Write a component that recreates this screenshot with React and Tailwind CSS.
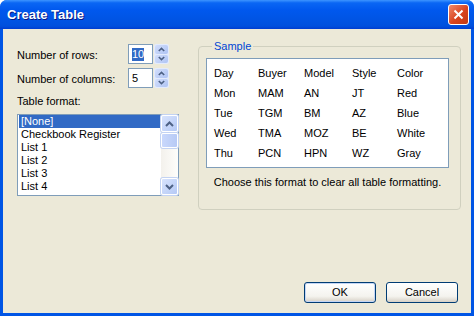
import { useState } from "react"

const font = { fontFamily: '"Liberation Sans", Arial, sans-serif' }

const sample = [
    ["Day", "Buyer", "Model", "Style", "Color"],
    ["Mon", "MAM", "AN", "JT", "Red"],
    ["Tue", "TGM", "BM", "AZ", "Blue"],
    ["Wed", "TMA", "MOZ", "BE", "White"],
    ["Thu", "PCN", "HPN", "WZ", "Gray"],
]

const formats = ["[None]", "Checkbook Register", "List 1", "List 2", "List 3", "List 4"]

function Chevron({ up, small }) {
    return (
        <svg width={small ? 7 : 9} height={small ? 5 : 6} viewBox="0 0 9 6">
            <path d={up ? "M1 5 L4.5 1.5 L8 5" : "M1 1 L4.5 4.5 L8 1"} fill="none" stroke="#4D6185" strokeWidth="2" />
        </svg>
    )
}

function Spin({ value, selected }) {
    return (
        <div className="flex h-[20px] gap-[1px]">
            <div className="w-[25px] h-full bg-white border border-[#7F9DB9] flex items-center pl-[3px]">
                <span className={selected ? "bg-[#316AC5] text-white leading-[13px]" : "leading-[13px]"}>{value}</span>
            </div>
            <div className="w-[15px] h-full flex flex-col bg-[#E3EBFD] p-[1px] gap-[1px] rounded-[2px]">
                <div className="flex-1 bg-[linear-gradient(135deg,#D2DEFB,#AFC4F4)] rounded-[2px] flex items-center justify-center">
                    <Chevron up small />
                </div>
                <div className="flex-1 bg-[linear-gradient(135deg,#D2DEFB,#AFC4F4)] rounded-[2px] flex items-center justify-center">
                    <Chevron small />
                </div>
            </div>
        </div>
    )
}

function ScrollBtn({ up }) {
    return (
        <div className="h-[17px] w-[17px] bg-[linear-gradient(135deg,#D7E3FD,#B5C9F5)] border border-white rounded-[2px] flex items-center justify-center shadow-[0_0_0_1px_#C3D3F3]">
            <Chevron up={up} />
        </div>
    )
}

export default function App() {
    const [sel, setsel] = useState(0)

    return (
        <div className="w-[474px] h-[316px] flex flex-col bg-[#0055E5] rounded-t-[7px] overflow-hidden text-[11px] text-black" style={font}>

            {/* title bar */}
            <div className="h-[29px] shrink-0 flex items-center justify-between pl-[7px] pr-[5px] bg-[linear-gradient(180deg,#3D95FF_0%,#0A66F4_10%,#0058EE_35%,#0054E3_70%,#0050DD_90%,#003DD0_100%)]">
                <span className="text-white font-bold text-[13px] [text-shadow:1px_1px_0_#0A1883]">Create Table</span>
                <div className="w-[21px] h-[21px] rounded-[3px] border border-white bg-[linear-gradient(135deg,#F08A6C,#D8431E_55%,#C13A14)] flex items-center justify-center">
                    <svg width="11" height="11" viewBox="0 0 11 11">
                        <path d="M1.5 1.5 L9.5 9.5 M9.5 1.5 L1.5 9.5" stroke="white" strokeWidth="2" />
                    </svg>
                </div>
            </div>

            {/* body */}
            <div className="flex-1 mx-[3px] mb-[3px] bg-[#ECE9D8] flex flex-col">
                <div className="flex items-start">

                    <div className="ml-[14px] mt-[15px] w-[162px] flex flex-col">
                        <div className="flex items-center h-[20px]">
                            <span className="w-[111px] pt-[2px]">Number of rows:</span>
                            <Spin value="10" selected />
                        </div>
                        <div className="flex items-center h-[20px] mt-[4px]">
                            <span className="w-[111px] pt-[2px]">Number of columns:</span>
                            <Spin value="5" />
                        </div>
                        <div className="mt-[7px] leading-[13px]">Table format:</div>

                        <div className="mt-[6px] h-[82px] w-[162px] border border-[#7F9DB9] bg-white flex">
                            <div className="flex-1 pl-[1px]">
                                {formats.map((f, i) => (
                                    <div
                                        key={i}
                                        onClick={() => setsel(i)}
                                        className={"h-[13px] leading-[13px] pl-[2px] cursor-default " + (sel === i ? "bg-[#316AC5] text-white" : "")}
                                    >
                                        {f}
                                    </div>
                                ))}
                            </div>
                            <div className="w-[17px] bg-[linear-gradient(90deg,#F3F1EC,#FEFEFB)] flex flex-col justify-between">
                                <div>
                                    <ScrollBtn up />
                                    <div className="mt-[1px] h-[15px] w-[17px] bg-[linear-gradient(90deg,#C9D8FC,#B7CAF5)] border border-white rounded-[2px] shadow-[0_0_0_1px_#C3D3F3]" />
                                </div>
                                <ScrollBtn />
                            </div>
                        </div>
                    </div>

                    <fieldset className="ml-[19px] mt-[11px] w-[263px] h-[170px] border border-[#D0D0BF] rounded-[4px] pl-[7px] pr-[11px]">
                        <legend className="text-[#0046D5] px-[2px] ml-[6px] leading-[13px]">Sample</legend>
                        <div className="mt-[5px] border border-[#7F9DB9] bg-white py-[4px] pl-[7px] grid grid-cols-[44px_46px_48px_45px_1fr]">
                            {sample.flat().map((t, i) => (
                                <div key={i} className="h-[20px] leading-[20px]">{t}</div>
                            ))}
                        </div>
                        <div className="mt-[8px] text-center leading-[13px]">Choose this format to clear all table formatting.</div>
                    </fieldset>
                </div>

                <div className="flex-1" />

                <div className="flex justify-end gap-[10px] pr-[13px] pb-[10px]">
                    <button className="w-[72px] h-[21px] rounded-[3px] border border-[#003C74] bg-[linear-gradient(180deg,#FFFFFF,#F4F3EE_70%,#D6D0C5)] shadow-[inset_0_0_0_1px_#C4D6F5]">OK</button>
                    <button className="w-[72px] h-[21px] rounded-[3px] border border-[#003C74] bg-[linear-gradient(180deg,#FFFFFF,#F4F3EE_70%,#D6D0C5)]">Cancel</button>
                </div>
            </div>
        </div>
    )
}
